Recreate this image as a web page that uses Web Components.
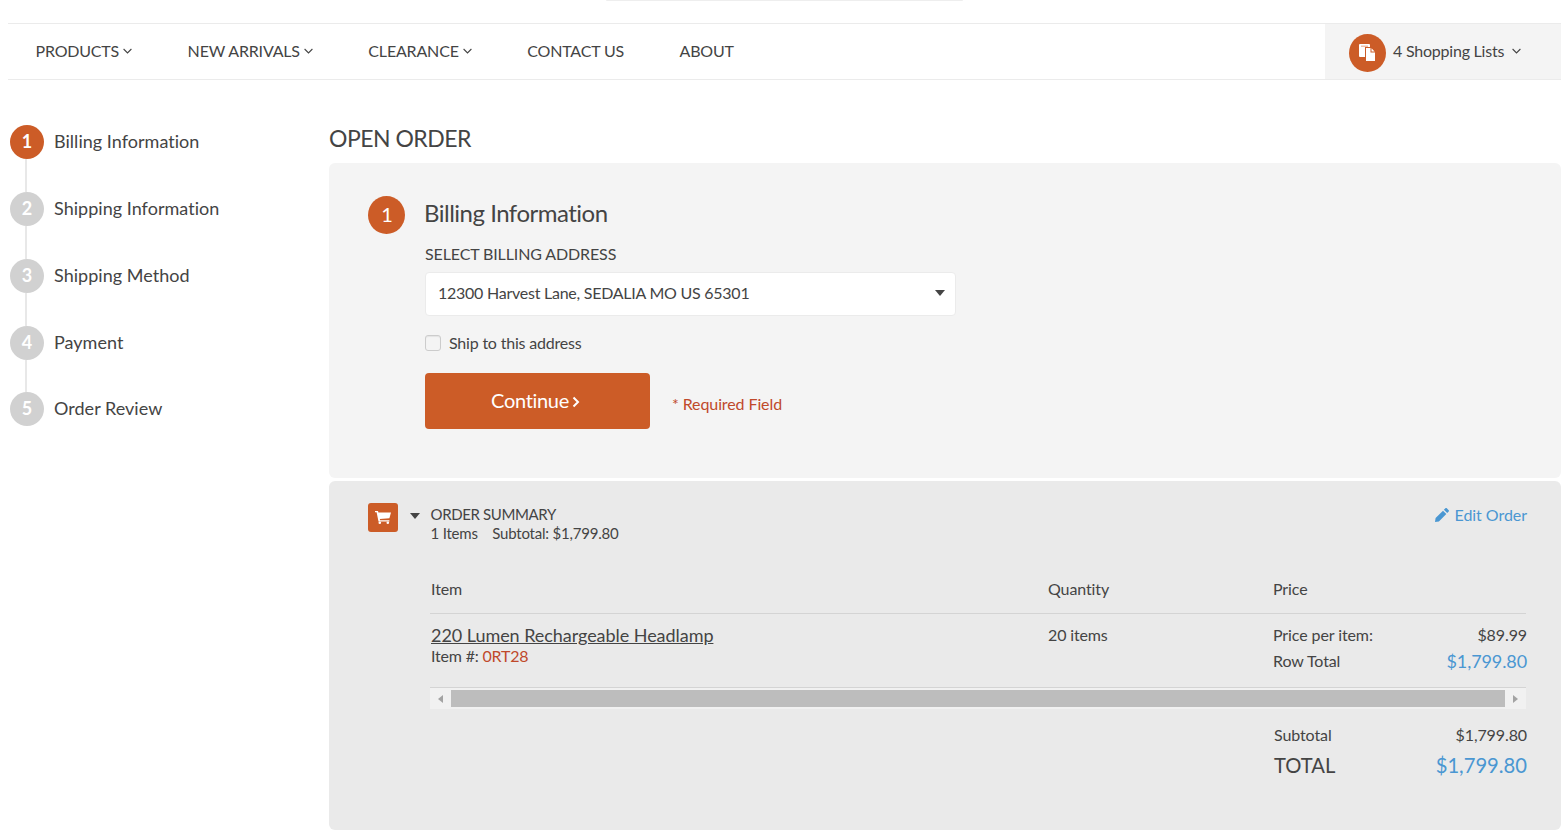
<!DOCTYPE html>
<html><head><meta charset="utf-8"><style>
html,body{margin:0;padding:0;background:#fff}
body{font-family:Lato,"Liberation Sans",sans-serif;color:#444;height:838px;overflow:hidden}
</style></head><body>
<app-page></app-page>
<script>
const def=(name,html)=>customElements.define(name,class extends HTMLElement{constructor(){super();this.attachShadow({mode:'open'}).innerHTML=typeof html==='function'?html(this):html;}});
const chev=`<svg width="9" height="6" viewBox="0 0 9 6" fill="none" stroke="#444" stroke-width="1.100"><path d="M.6 1l3.900 3.900L8.400 1"/></svg>`;
def('nav-item',h=>`<style>:host{display:flex;align-items:center;gap:4px;padding:0 28px 2px 27.5px;font-size:16px;letter-spacing:-.18px;color:#444;white-space:nowrap}</style><slot></slot>${h.hasAttribute('menu')?chev:''}`);
def('list-button',`<style>:host{display:flex;align-items:center;width:236px;box-sizing:border-box;padding:0 0 2px 24px;background:#f4f4f4;font-size:16px;letter-spacing:-.22px;color:#444;white-space:nowrap}
.c{width:37px;height:38px;border-radius:50%;background:#cc5c27;display:flex;align-items:center;justify-content:center;margin:4px 7px 0 0}
.s{margin-left:8px;display:flex}</style>
<span class="c"><svg width="17" height="17" viewBox="0 0 17 17"><rect width="11" height="13" rx="1" fill="#fff"/><rect x="2" y="1.500" width="7" height="1.500" fill="#f0c0a8"/><path fill="#cc5c27" d="M6 3h6.500L17 7.500V17.500H6z"/><path fill="#fff" d="M7 4h4.500v4.500H16V17H7z"/><path fill="#fff" d="M12.500 4.300l3.200 3.200h-3.200z"/></svg></span><slot></slot><span class="s">${chev}</span>`);
def('site-nav',`<style>:host{display:flex;height:55px;margin:0 7px 0 8px;border-top:1px solid #ebebeb;border-bottom:1px solid #ebebeb;justify-content:space-between}
.l{display:flex}</style><div class="l"><nav-item menu>PRODUCTS</nav-item><nav-item menu>NEW ARRIVALS</nav-item><nav-item menu>CLEARANCE</nav-item><nav-item>CONTACT US</nav-item><nav-item>ABOUT</nav-item></div><list-button>4 Shopping Lists</list-button>`);
def('step-item',h=>`<style>:host{display:flex;align-items:center;gap:10px;height:34px;font-size:18px;letter-spacing:.03px;color:#444;position:relative;white-space:nowrap;${h.hasAttribute('last')?'margin-top:-1px;':''}}
.n{width:34px;height:34px;box-sizing:border-box;padding-bottom:2px;border-radius:50%;background:${h.hasAttribute('active')?'#cc5c27':'#d1d1d1'};color:#fff;font-weight:700;font-size:18px;display:flex;align-items:center;justify-content:center;flex:none;position:relative;z-index:1}
.txt{padding-bottom:2px}
.line{position:absolute;left:15px;top:34px;width:2px;height:33px;background:#e8e8e8;${h.hasAttribute('last')?'display:none':''}}</style><span class="line"></span><span class="n">${h.getAttribute('n')}</span><span class="txt"><slot></slot></span>`);
def('step-nav',`<style>:host{display:flex;flex-direction:column;gap:33px;width:321px;padding:45px 0 0 2px;flex:none;box-sizing:border-box}</style><slot></slot>`);
def('address-select',`<style>:host{display:flex;align-items:center;justify-content:space-between;box-sizing:border-box;width:531px;height:44px;background:#fff;border:1px solid #ebebeb;border-radius:4px;padding:0 10px 4px 12px;font-size:16px;letter-spacing:-.25px;color:#444}
i{width:0;height:0;border:5px solid transparent;border-top:6px solid #444;border-bottom:0;margin-top:2px}</style><slot></slot><i></i>`);
def('billing-panel',`<style>:host{display:block;background:#f4f4f4;border-radius:6px;height:315px;box-sizing:border-box;padding:33px 0 0 39px;position:relative}
.h{display:flex;align-items:center;gap:19px;height:38px}
.n{width:37px;height:38px;box-sizing:border-box;padding:0 0 2px 1px;border-radius:50%;background:#cc5c27;color:#fff;font-size:20px;display:flex;align-items:center;justify-content:center}
h2{margin:0;font-weight:400;font-size:24px;letter-spacing:-.5px;color:#444;padding-bottom:6px}
.b{margin-left:57px}
.lab{font-size:16px;letter-spacing:-.12px;margin-top:8px;line-height:24px;color:#444}
address-select{margin-top:6px}
.chk{display:flex;align-items:center;gap:8px;margin-top:14px;font-size:16px;letter-spacing:-.2px;height:24px}
.chk i{width:14px;height:14px;border:1px solid #ccc;border-radius:3px;background:#f4f4f4;box-shadow:inset 0 1px 1px #e4e4e4;margin-top:1px}
.act{display:flex;align-items:center;margin-top:19px}
.btn{width:225px;height:56px;background:#cc5c27;border-radius:4px;color:#fff;font-size:20px;letter-spacing:-.3px;display:flex;align-items:center;justify-content:center;gap:3px;padding:0 4px 2px 0;box-sizing:border-box}
.req{margin-left:22px;font-size:16px;letter-spacing:-.1px;color:#c0492b;position:relative;top:2px}
</style>
<div class="h"><span class="n">1</span><h2>Billing Information</h2></div>
<div class="b"><div class="lab">SELECT BILLING ADDRESS</div>
<address-select>12300 Harvest Lane, SEDALIA MO US 65301</address-select>
<div class="chk"><i></i><span>Ship to this address</span></div>
<div class="act"><div class="btn"><span>Continue</span><svg width="8" height="12" viewBox="0 0 8 12" fill="none" stroke="#fff" stroke-width="2" style="margin-top:4px"><path d="M1.500 1.500l4.500 4.500-4.500 4.500"/></svg></div><span class="req">* Required Field</span></div></div>`);
def('order-summary',`<style>:host{display:block;background:#eaeaea;border-radius:6px;height:349px;margin-top:3px;box-sizing:border-box;padding:22px 34px 0 39px;font-size:16px;color:#444;letter-spacing:-.1px}
.top{display:flex;align-items:flex-start}
.cart{width:30px;height:29px;background:#cc5c27;border-radius:3px;display:flex;align-items:center;justify-content:center;flex:none}
.tri{width:0;height:0;border:5.500px solid transparent;border-top:6px solid #444;border-bottom:0;margin:10px 10.500px 0 12px}
.t{flex:1;line-height:19px;margin-top:2px;font-size:15px}
.t .a{letter-spacing:-.37px}.t .s{letter-spacing:-.2px}.t .s span+span{margin-left:14.500px}
.edit{display:flex;align-items:center;gap:6px;color:#4a97d2;margin-top:2px;line-height:19px;letter-spacing:-.05px}
.tbl{margin:25px 1px 0 62px}
.row{display:grid;grid-template-columns:617px 225px 1fr;padding-left:1px}
.head{height:46px;align-items:center;border-bottom:1px solid #d4d4d4;box-sizing:border-box;padding-bottom:5px}
.body{height:74px;border-bottom:1px solid #d4d4d4;box-sizing:border-box;padding-top:10px}
.link{font-size:18px;letter-spacing:-.05px;text-decoration:underline;line-height:22px;color:#444}
.num{line-height:19px;color:#444;letter-spacing:-.2px}.num b{font-weight:400;color:#c0492b}
.qty{line-height:21px;letter-spacing:-.15px}
.pc{margin:-2px -1px 0 0}
.p{display:flex;justify-content:space-between;line-height:26px}
.blue{color:#4a97d2}.lg{font-size:18px}
.bar{height:21px;background:#f1f1f1;display:grid;grid-template-columns:21px 1fr 21px;align-items:center;justify-items:center}
.thumb{width:100%;height:17px;background:#bdbdbd}
.ar{width:0;height:0;border:4.500px solid transparent}
.tot{margin:14px -1px 0 844px}
.tr{display:flex;justify-content:space-between;line-height:24px}
.tr.big{font-size:20.200px;letter-spacing:0;line-height:36px}
</style>
<div class="top"><span class="cart"><svg width="16" height="13" viewBox="0 0 16 13"><path fill="#fff" d="M0 0h3l.4 1.500H16l-1.600 5.800-9.600.8.300 1.100h9.300v1.200H3.500L1.600 1.200H0z"/><circle cx="4.800" cy="11.700" r="1.300" fill="#fff"/><circle cx="12.800" cy="11.700" r="1.300" fill="#fff"/></svg></span><span class="tri"></span>
<div class="t"><div class="a">ORDER SUMMARY</div><div class="s"><span>1 Items</span><span>Subtotal: $1,799.80</span></div></div>
<div class="edit"><svg width="14" height="14" viewBox="0 0 14 14"><path fill="#4a97d2" d="M10.400.3c.4-.4 1-.4 1.400 0l1.900 1.900c.4.4.4 1 0 1.400l-1.500 1.500L8.900 1.800zM8 2.700L11.300 6l-7.400 7.400L0 14l.6-3.900z"/></svg><span>Edit Order</span></div></div>
<div class="tbl"><div class="row head"><span>Item</span><span>Quantity</span><span>Price</span></div>
<div class="row body"><div><div class="link">220 Lumen Rechargeable Headlamp</div><div class="num">Item #: <b>0RT28</b></div></div><div class="qty">20 items</div>
<div class="pc"><div class="p"><span>Price per item:</span><span>$89.99</span></div><div class="p"><span>Row Total</span><span class="blue lg">$1,799.80</span></div></div></div>
<div class="bar"><i class="ar" style="border-right:5px solid #a3a3a3;border-left:0"></i><i class="thumb"></i><i class="ar" style="border-left:5px solid #a3a3a3;border-right:0"></i></div>
<div class="tot"><div class="tr"><span>Subtotal</span><span>$1,799.80</span></div><div class="tr big"><span>TOTAL</span><span class="blue">$1,799.80</span></div></div></div>`);
def('app-page',`<style>:host{display:block}
.top{height:23px;display:flex;justify-content:center}
.top i{width:357px;height:1px;background:#eee;margin-left:1px;border-radius:0 0 3px 3px}
.wrap{display:flex;padding:0 7px 0 8px}
main{flex:1;min-width:0}
h1{margin:0;font-weight:400;font-size:23px;letter-spacing:-.5px;color:#444;height:83px;box-sizing:border-box;padding:43px 0 0 0;line-height:30px}
</style><div class="top"><i></i></div><site-nav></site-nav>
<div class="wrap"><step-nav><step-item n="1" active>Billing Information</step-item><step-item n="2">Shipping Information</step-item><step-item n="3">Shipping Method</step-item><step-item n="4">Payment</step-item><step-item n="5" last>Order Review</step-item></step-nav>
<main><h1>OPEN ORDER</h1><billing-panel></billing-panel><order-summary></order-summary></main></div>`);
</script></body></html>
